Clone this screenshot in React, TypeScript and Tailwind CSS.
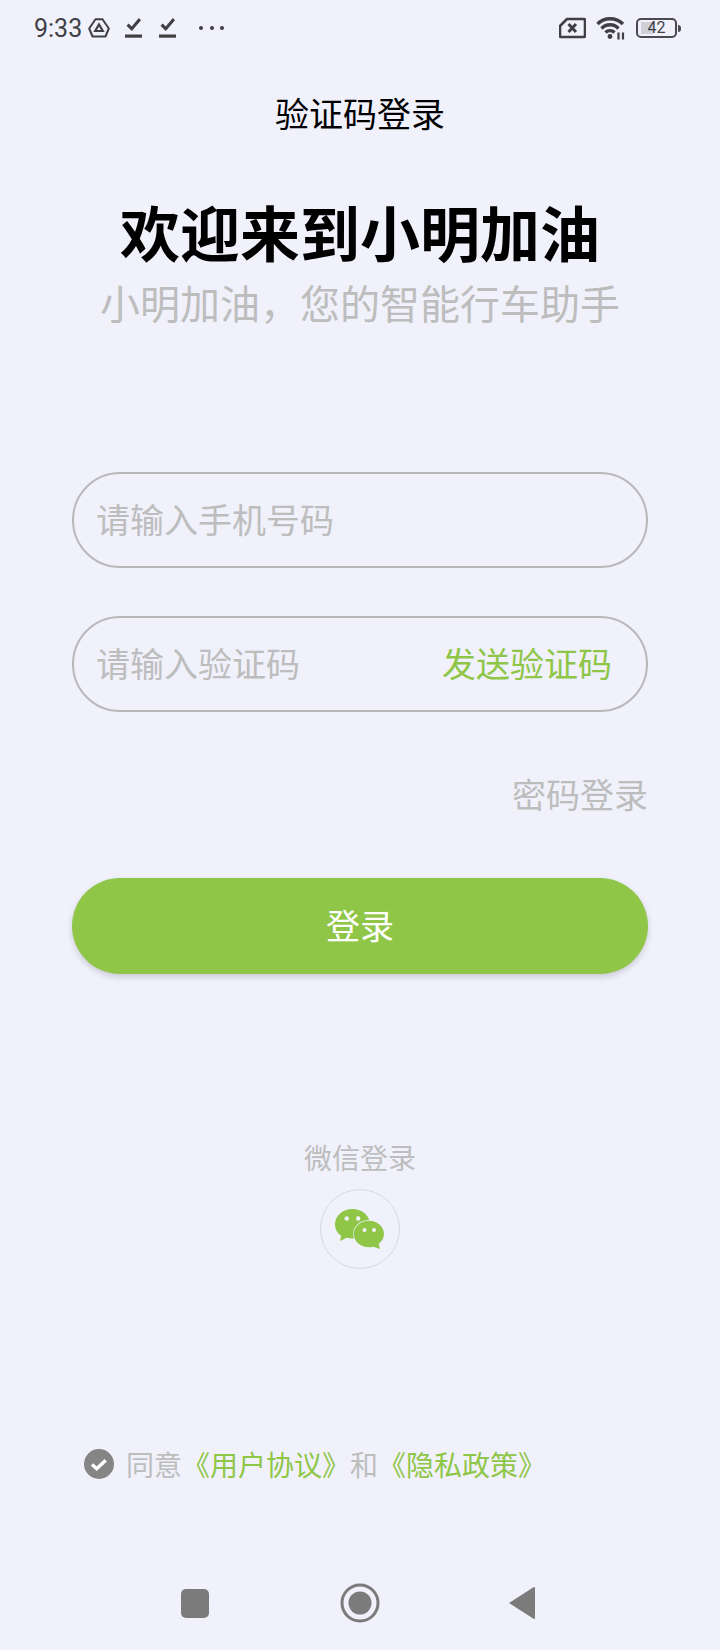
const cjk = "font-['Noto_Sans_CJK_SC','Noto_Sans',sans-serif]";

const TaskIcon = ({ className }: { className: string }) => (
  <svg className={className} width="17" height="20" viewBox="0 0 17 20" fill="currentColor">
    <path d="M1.500 7.800l2.200-2.200 3 3L13.800 0 16 2.200 6.800 13z" />
    <rect x="0" y="16.500" width="17" height="3.200" />
  </svg>
);

const StatusBar = () => (
  <div className="flex h-[56px] items-center justify-between pl-[34px] pr-[39px] text-[#404044]">
    <div className="flex items-center">
      <span className="font-['Roboto',sans-serif] text-[25px] leading-none">9:33</span>
      <svg className="ml-[6px]" width="22" height="20" viewBox="0 0 22 20" fill="none" stroke="currentColor" strokeWidth="2">
        <path d="M7.500 1.200h7l6.300 9.300-3.300 8H4.500l-3.300-8z" strokeLinejoin="round" />
        <path d="M11 6.500l3.800 6.500H7.200z" strokeWidth="2.200" />
      </svg>
      <TaskIcon className="ml-[15px]" />
      <TaskIcon className="ml-[17px]" />
      <div className="ml-[23px] flex gap-[6.500px]">
        <span className="h-[4px] w-[4px] rounded-full bg-[#404044]" />
        <span className="h-[4px] w-[4px] rounded-full bg-[#404044]" />
        <span className="h-[4px] w-[4px] rounded-full bg-[#404044]" />
      </div>
    </div>
    <div className="flex items-center">
      <svg width="27" height="22" viewBox="0 0 27 22" fill="none" stroke="currentColor">
        <path d="M8 2h17a1 1 0 0 1 1 1v16a1 1 0 0 1-1 1H2a1 1 0 0 1-1-1V9z" strokeWidth="2.600" strokeLinejoin="round" />
        <path d="M9.500 7l7.500 8M17 7l-7.500 8" strokeWidth="3" />
      </svg>
      <svg className="ml-[10px]" width="30" height="24" viewBox="0 0 30 24" fill="none" stroke="currentColor" strokeWidth="3.400">
        <path d="M1.500 8C8 1 20 1 27 8" />
        <path d="M5.500 12.500C10 7.500 18 7.500 22.500 12.500" />
        <path d="M9.500 16.500C12 14 16 14 18.500 16.500" />
        <circle cx="14" cy="20.500" r="2.400" fill="currentColor" stroke="none" />
        <path d="M22.500 16.500v7M27 16.500v7" strokeWidth="2.200" />
      </svg>
      <div className="ml-[10px] flex items-center">
        <div className="flex h-[20px] w-[41px] items-center justify-center rounded-[5px] border-2 border-[#4a4a50] bg-[linear-gradient(90deg,#d0d0d8_40%,transparent_40%)] bg-clip-content px-[3px] py-[2px] font-['Roboto',sans-serif] text-[16px] leading-none">
          42
        </div>
        <span className="ml-[1px] h-[7px] w-[3px] rounded-r-sm bg-[#4a4a50]" />
      </div>
    </div>
  </div>
);

const Field = ({ placeholder, action }: { placeholder: string; action?: string }) => (
  <div className="flex h-[96px] items-center justify-between rounded-full border-2 border-[#b8b8bc] pb-[3px] pl-[22px] pr-[34px] text-[34px]">
    <span className="text-[#bdbdbd]">{placeholder}</span>
    {action && <span className="text-[#8fc648]">{action}</span>}
  </div>
);

const WechatIcon = () => (
  <svg className="mr-[2px]" width="49" height="40" viewBox="0 0 49 40" fill="#8fc648">
    <path d="M17.500 0C7.800 0 0 6.800 0 15.300c0 4.700 2.400 8.800 6.200 11.600L5 32l6.800-3.200c1.700.5 3.600.8 5.700.8 9.700 0 17.500-6.500 17.500-14.300C35 6.800 27.200 0 17.500 0z" />
    <ellipse cx="34" cy="25" rx="15.800" ry="14" fill="#f0f1fb" />
    <path d="M34 11.700C25.700 11.700 18.800 17.600 18.800 25s6.900 13.300 15.200 13.300c1.600 0 3.200-.2 4.600-.6L45 40l-1.300-5.300C46.900 32.300 49 28.900 49 25c0-7.400-6.800-13.300-15-13.300z" />
    <circle cx="11.700" cy="9.500" r="2.200" fill="#f0f1fb" />
    <circle cx="23.200" cy="9.500" r="2.200" fill="#f0f1fb" />
    <circle cx="29.500" cy="21" r="2" fill="#f0f1fb" />
    <circle cx="39" cy="21" r="2" fill="#f0f1fb" />
  </svg>
);

const NavBar = () => (
  <div className="mt-[99px] flex items-center pl-[181px]">
    <span className="h-[29px] w-[28px] rounded-[5px] bg-[#7b7b7b]" />
    <svg className="ml-[131px]" width="40" height="40" viewBox="0 0 40 40">
      <circle cx="20" cy="20" r="18" fill="none" stroke="#7b7b7b" strokeWidth="3" />
      <circle cx="20" cy="20" r="11.500" fill="#7b7b7b" />
    </svg>
    <svg className="ml-[128px]" width="28" height="34" viewBox="0 0 28 34" fill="#7b7b7b">
      <path d="M1 17L25.500 1.200Q27 .6 27 2v30q0 1.400-1.500.8z" />
    </svg>
  </div>
);

export default function App() {
  return (
    <div className={`${cjk} h-[1650px] w-[720px] overflow-hidden bg-[#f0f1fb]`}>
      <StatusBar />
      <h1 className="mt-[33px] text-center text-[34px] leading-[48px] text-black">验证码登录</h1>
      <h2 className="mt-[56px] text-center text-[60px] font-bold leading-[76px] text-black">欢迎来到小明加油</h2>
      <p className="mt-[5px] text-center text-[40px] leading-[56px] text-[#bdbdbd]">小明加油，您的智能行车助手</p>

      <div className="mt-[142px] flex flex-col px-[72px]">
        <Field placeholder="请输入手机号码" />
        <div className="mt-[48px]">
          <Field placeholder="请输入验证码" action="发送验证码" />
        </div>
        <p className="mt-[58px] text-right text-[34px] leading-[48px] text-[#bdbdbd]">密码登录</p>
        <button className="mt-[60px] h-[96px] rounded-full bg-[#8fc648] pb-[4px] text-[34px] text-white shadow-[0_3px_6px_rgba(0,0,0,0.16)]">
          登录
        </button>
      </div>

      <div className="mt-[163px] flex flex-col items-center">
        <span className="text-[28px] leading-[40px] text-[#bdbdbd]">微信登录</span>
        <div className="mt-[12px] flex h-[80px] w-[80px] items-center justify-center rounded-full border border-[#d8d8dc]">
          <WechatIcon />
        </div>
      </div>

      <div className="mt-[175px] flex items-center pl-[84px] text-[28px] leading-[40px]">
        <svg width="30" height="30" viewBox="0 0 30 30">
          <circle cx="15" cy="15" r="15" fill="#858585" />
          <path d="M8 15.500l4.700 4.200 9-8.500" fill="none" stroke="#fff" strokeWidth="3.400" />
        </svg>
        <span className="ml-[12px] text-[#bdbdbd]">同意</span>
        <span className="text-[#8fc648]">《用户协议》</span>
        <span className="text-[#bdbdbd]">和</span>
        <span className="text-[#8fc648]">《隐私政策》</span>
      </div>

      <NavBar />
    </div>
  );
}
